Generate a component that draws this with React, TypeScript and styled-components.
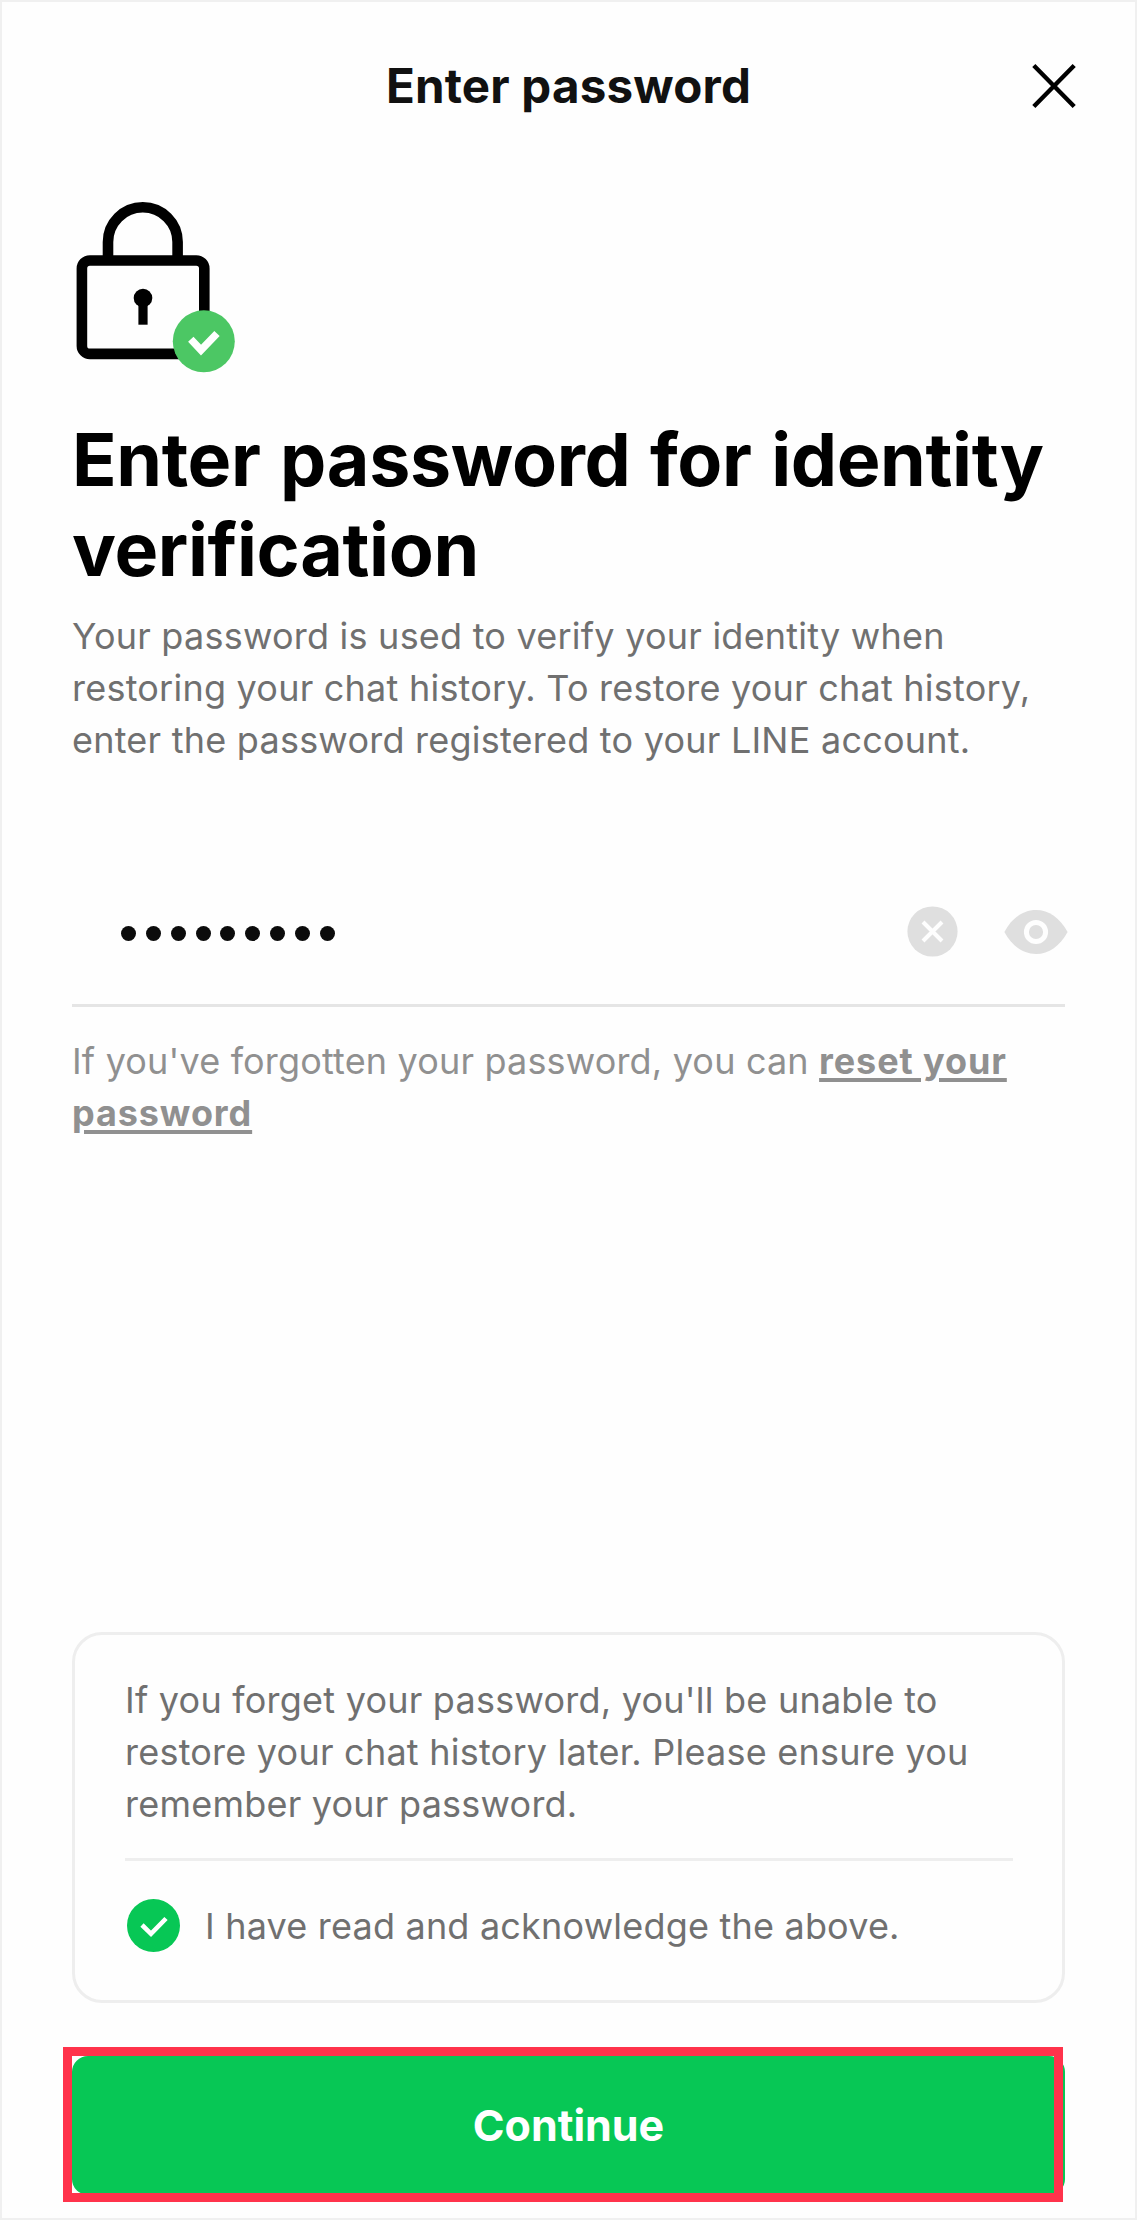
import React from "react";
import styled, { createGlobalStyle } from "styled-components";

const GlobalStyle = createGlobalStyle`
  *, *::before, *::after { box-sizing: border-box; }
  body { margin: 0; background: #fefefe; }
`;

const Screen = styled.main`
  display: flex;
  flex-direction: column;
  width: 1137px;
  height: 2220px;
  padding: 0 70px 23.5px;
  border: 2px solid #f0f0f0;
  background: #fefefe;
  font-family: Inter, "Liberation Sans", sans-serif;
  font-variant-ligatures: none;
  overflow: hidden;
`;

const Header = styled.header`
  display: grid;
  grid-template-columns: 1fr auto 1fr;
  align-items: center;
  height: 168px;
  margin: 0 -11.5px;
`;

const HeaderTitle = styled.h1`
  grid-column: 2;
  margin: 0;
  color: #111;
  font-size: 47.5px;
  font-weight: 650;
  line-height: 60px;
  letter-spacing: 0.2px;
  white-space: nowrap;
`;

const IconButton = styled.button`
  display: flex;
  padding: 0;
  border: 0;
  background: none;
`;

const CloseButton = styled(IconButton)`
  justify-self: end;
`;

const LockArt = styled.svg`
  display: block;
  flex: none;
  margin: 30px 0 0 4px;
`;

const Heading = styled.h2`
  margin: 42px 0 0;
  color: #000;
  font-size: 73.5px;
  font-weight: 700;
  line-height: 90px;
  letter-spacing: -0.35px;
  word-spacing: 2.5px;
  white-space: nowrap;
`;

const Copy = styled.p<{ $tracking?: number }>`
  margin: 0;
  color: #707070;
  font-size: 36px;
  font-weight: 400;
  line-height: 52px;
  letter-spacing: ${({ $tracking = 0.23 }) => $tracking}px;
  white-space: nowrap;
`;

const Intro = styled(Copy)`
  margin-top: 14.5px;
`;

const Field = styled.div`
  display: flex;
  align-items: center;
  height: 150px;
  margin-top: 91.5px;
  padding: 2.4px 0 0 49px;
  border-bottom: 3px solid #e5e5e5;
`;

const Dots = styled.div`
  display: flex;
  flex: 1;
  gap: 9.85px;
  margin-top: 4.6px;
`;

const Dot = styled.span`
  width: 15px;
  height: 15px;
  border-radius: 50%;
  background: #0b0b0b;
`;

const FieldActions = styled.div`
  display: flex;
  align-items: center;
  gap: 46px;
  margin-right: -3px;
`;

const Help = styled(Copy)`
  margin-top: 27.5px;
  color: #909090;
`;

const ResetLink = styled.a`
  color: #909090;
  font-weight: 700;
  letter-spacing: 0.9px;
  text-decoration: underline;
  text-decoration-thickness: 4px;
  text-underline-offset: 4px;
`;

const Notice = styled.section`
  margin-top: auto;
  padding: 39.5px 49px 0 50px;
  height: 371px;
  border: 3px solid #eee;
  border-radius: 30px;
`;

const Acknowledge = styled.label`
  display: flex;
  align-items: center;
  gap: 25px;
  height: 133px;
  margin-top: 27.5px;
  padding-left: 2px;
  border-top: 3px solid #eee;
`;

const ContinueFrame = styled.div`
  position: relative;
  display: flex;
  flex: none;
  height: 139px;
  margin-top: 52.7px;

  &::after {
    content: "";
    position: absolute;
    inset: -8.7px 2.2px -7.7px -9.5px;
    border: 9.5px solid #ff334b;
    pointer-events: none;
  }
`;

const ContinueButton = styled.button`
  flex: 1;
  padding: 0;
  border: 0;
  border-radius: 16px;
  background: #07c755;
  color: #fff;
  font: 700 43px/60px Inter, "Liberation Sans", sans-serif;
`;

export default function App() {
  return (
    <>
      <GlobalStyle />
      <Screen>
        <Header>
          <HeaderTitle>Enter password</HeaderTitle>
          <CloseButton aria-label="Close">
            <svg width="46" height="46" viewBox="0 0 46 46" fill="none" stroke="#000" strokeWidth="4.4">
              <path d="M2.8 2.5 43.2 43.5M43.2 2.5 2.8 43.5" />
            </svg>
          </CloseButton>
        </Header>

        <LockArt width="160" height="173" viewBox="0 0 160 173" fill="none">
          <path d="M32 57V42a34.8 34.8 0 0 1 69.6 0v15" stroke="#000" strokeWidth="10.6" />
          <rect x="5.9" y="60.5" width="122.4" height="93.4" rx="8" stroke="#000" strokeWidth="10.6" />
          <circle cx="67" cy="98" r="9.3" fill="#000" />
          <path d="M67 100v24.7" stroke="#000" strokeWidth="9.2" />
          <circle cx="127.8" cy="141.3" r="31" fill="#4cc764" />
          <path d="m114.8 139.3 10.2 10.8 16-16.6" stroke="#fff" strokeWidth="7.4" />
        </LockArt>

        <Heading>
          Enter password for identity
          <br />
          verification
        </Heading>
        <Intro>
          Your password is used to verify your identity when
          <br />
          restoring your chat history. To restore your chat history,
          <br />
          enter the password registered to your LINE account.
        </Intro>

        <Field>
          <Dots>
            {Array.from({ length: 9 }, (_, i) => (
              <Dot key={i} />
            ))}
          </Dots>
          <FieldActions>
            <IconButton aria-label="Clear">
              <svg width="51" height="51" viewBox="0 0 51 51" fill="none">
                <circle cx="25.5" cy="25.5" r="25.1" fill="#dfdfdf" />
                <path d="m16 16 19 19m0-19L16 35" stroke="#fefefe" strokeWidth="4" />
              </svg>
            </IconButton>
            <IconButton aria-label="Show password">
              <svg width="64" height="46" viewBox="0 0 64 46" fill="none">
                <path d="M.4 23C8 9 19 1 32 1s24 8 31.6 22C56 37 45 45 32 45S8 37 .4 23Z" fill="#dfdfdf" />
                <circle cx="32" cy="23" r="9.6" stroke="#fefefe" strokeWidth="5" />
              </svg>
            </IconButton>
          </FieldActions>
        </Field>

        <Help $tracking={0.17}>
          If you've forgotten your password, you can{" "}
          <ResetLink>
            reset your
            <br />
            password
          </ResetLink>
        </Help>

        <Notice>
          <Copy>
            If you forget your password, you'll be unable to
            <br />
            restore your chat history later. Please ensure you
            <br />
            remember your password.
          </Copy>
          <Acknowledge>
            <svg width="53" height="53" viewBox="0 0 53 53" fill="none">
              <circle cx="26.5" cy="26.5" r="26.5" fill="#07c755" />
              <path d="m15 26 9 8.8 15-15.3" stroke="#fff" strokeWidth="4.6" />
            </svg>
            <Copy as="span" $tracking={0.2}>I have read and acknowledge the above.</Copy>
          </Acknowledge>
        </Notice>

        <ContinueFrame>
          <ContinueButton>Continue</ContinueButton>
        </ContinueFrame>
      </Screen>
    </>
  );
}
